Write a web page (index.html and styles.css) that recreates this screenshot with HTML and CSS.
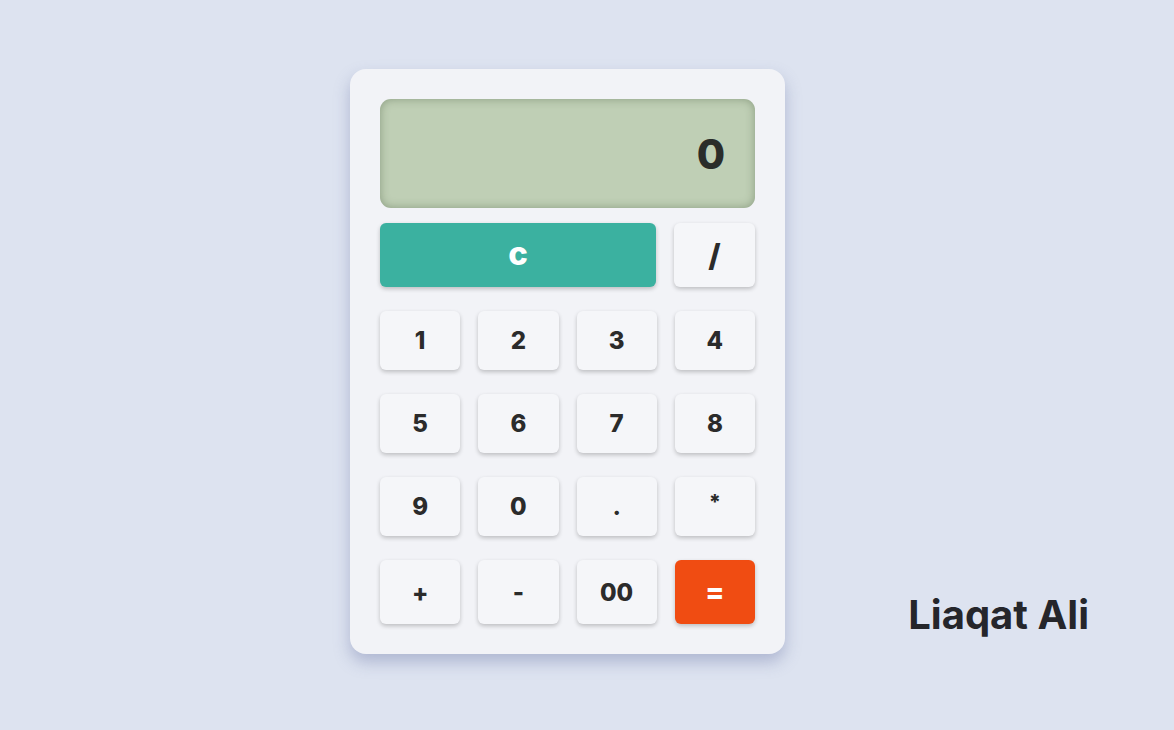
FILE: index.html
```html
<!DOCTYPE html>
<html>
<head>
<meta charset="utf-8">
<link rel="stylesheet" href="styles.css">
</head>
<body>
<div class="page">
  <div class="calc">
    <div class="display">0</div>
    <div class="top-row">
      <button class="btn btn-clear">c</button>
      <button class="btn btn-big">/</button>
    </div>
    <div class="keys">
      <button class="btn">1</button>
      <button class="btn">2</button>
      <button class="btn">3</button>
      <button class="btn">4</button>
      <button class="btn">5</button>
      <button class="btn">6</button>
      <button class="btn">7</button>
      <button class="btn">8</button>
      <button class="btn">9</button>
      <button class="btn">0</button>
      <button class="btn">.</button>
      <button class="btn btn-star">*</button>
      <button class="btn tall">+</button>
      <button class="btn tall">-</button>
      <button class="btn tall">00</button>
      <button class="btn tall btn-eq">=</button>
    </div>
  </div>
  <div class="name">Liaqat Ali</div>
</div>
</body>
</html>
```

FILE: styles.css
```css
html, body {
  margin: 0;
  padding: 0;
}
body {
  background: #dde3f0;
  font-family: "Inter", "Open Sans", sans-serif;
}
.page {
  height: 730px;
  box-sizing: border-box;
  display: flex;
  align-items: flex-start;
  padding: 69px 85px 0 350px;
}
.calc {
  width: 435px;
  box-sizing: border-box;
  padding: 30px;
  background: #f2f3f7;
  border-radius: 16px;
  box-shadow: 0 8px 16px rgba(100, 110, 160, 0.38);
}
.display {
  height: 109px;
  box-sizing: border-box;
  background: #bfcfb5;
  border-radius: 11px;
  box-shadow: inset 0 0 10px rgba(60, 80, 50, 0.4);
  display: flex;
  align-items: center;
  justify-content: flex-end;
  padding-right: 30px;
  font-size: 41px;
  font-weight: 800;
  color: #2a2d2a;
}
.top-row {
  display: flex;
  gap: 18px;
  margin-top: 15px;
}
.btn {
  border: none;
  background: #f5f6f9;
  border-radius: 6px;
  box-shadow: 0 2px 4px rgba(0, 0, 0, 0.22);
  font-family: inherit;
  font-weight: 800;
  font-size: 24px;
  color: #2b2b2b;
  height: 59px;
  padding: 0;
  display: flex;
  align-items: center;
  justify-content: center;
}
.top-row .btn {
  height: 64px;
}
.btn-clear {
  flex: 1;
  background: #3bb1a0;
  color: #ffffff;
  font-size: 33px;
  padding-bottom: 4px;
}
.btn-big {
  width: 81px;
  font-size: 31px;
}
.keys {
  display: grid;
  grid-template-columns: repeat(4, 1fr);
  column-gap: 18px;
  row-gap: 24px;
  margin-top: 24px;
}
.btn.tall {
  height: 64px;
}
.btn-star {
  font-size: 21px;
  padding-bottom: 8px;
}
.btn-eq {
  background: #f04c12;
  color: #ffffff;
  font-size: 28px;
}
.name {
  margin-left: auto;
  align-self: flex-end;
  margin-bottom: 91px;
  font-size: 40px;
  font-weight: 700;
  color: #25262b;
}
```
